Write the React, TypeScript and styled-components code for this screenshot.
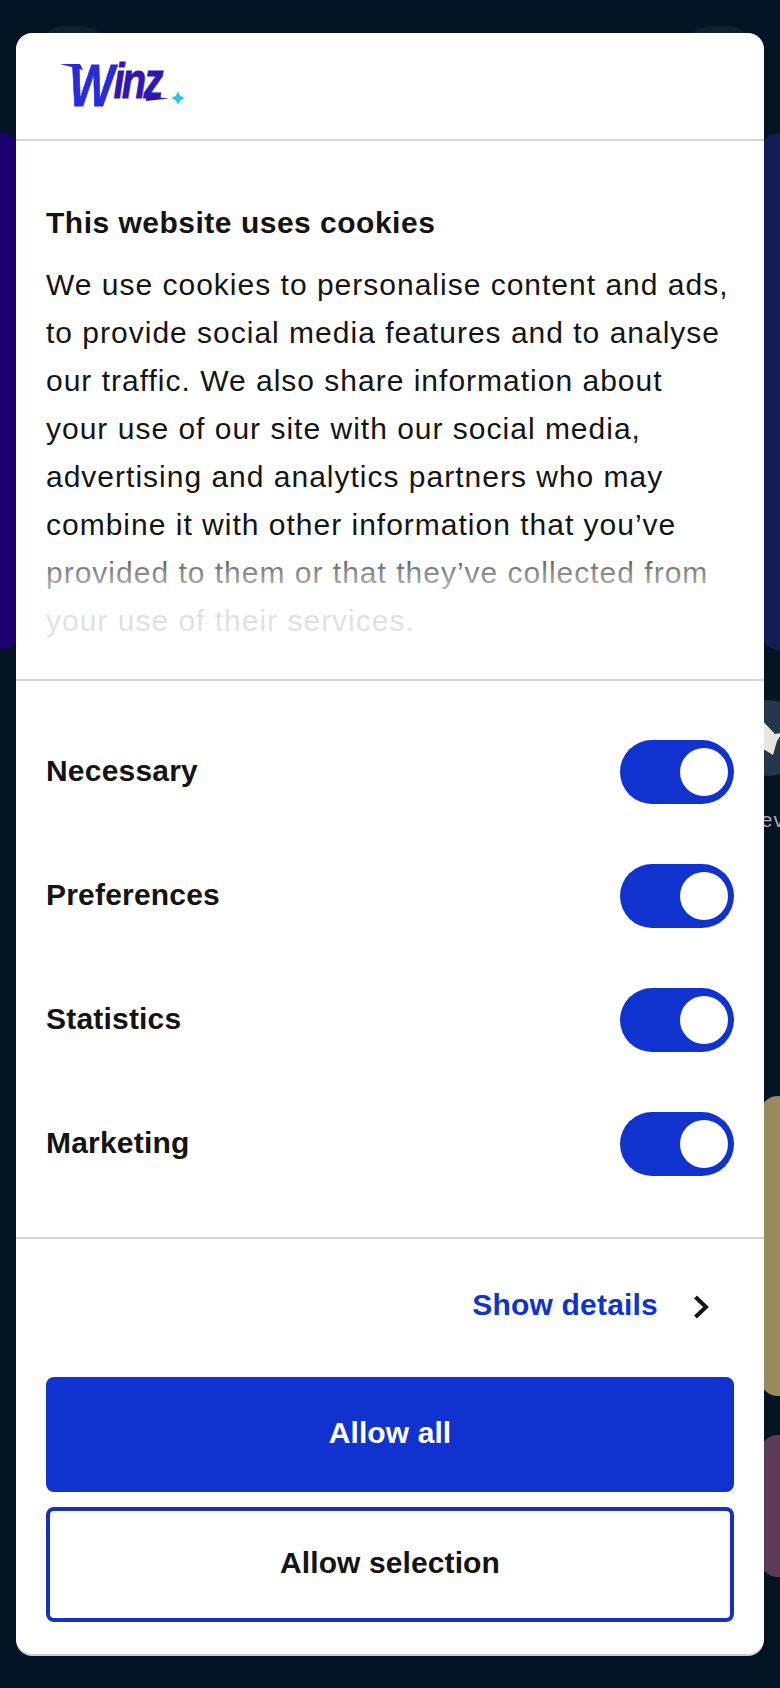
import React from "react";
import styled, { createGlobalStyle } from "styled-components";

const Global = createGlobalStyle`
  html, body { margin: 0; padding: 0; background: #05142a; }
  * { box-sizing: border-box; }
`;

const Page = styled.div`
  position: relative;
  width: 780px;
  height: 1688px;
  overflow: hidden;
  background: #041425;
  font-family: "Liberation Sans", Arial, sans-serif;
`;

const Backdrop = styled.div`
  display: flex;
  flex-direction: column;
  padding-top: 26px;
`;

const TopBar = styled.div`
  display: flex;
  justify-content: space-between;
  padding: 0 28px 0 40px;
  height: 107px;
`;

const TopChip = styled.div`
  width: 66px;
  height: 60px;
  border-radius: 24px;
  background: #101f2f;
`;

const HeroRow = styled.div`
  display: flex;
  justify-content: space-between;
  height: 517px;
`;

const HeroCard = styled.div<{ $tone: string; $side: "left" | "right" }>`
  width: 40px;
  background: ${(p) => p.$tone};
  margin-${(p) => p.$side}: -20px;
  border-radius: 20px;
`;

const ShortcutColumn = styled.div`
  display: flex;
  flex-direction: column;
  align-items: flex-end;
  margin-top: 50px;
  height: 396px;
`;

const ShortcutIcon = styled.svg`
  display: block;
  margin-right: -26px;
`;

const ShortcutLabel = styled.div`
  margin-top: 32px;
  margin-right: -51px;
  font-size: 21px;
  line-height: 24px;
  letter-spacing: 1px;
  color: #a3adb8;
`;

const PromoCard = styled.div<{ $tone: string; $height: number; $gap: number }>`
  align-self: flex-end;
  width: 40px;
  height: ${(p) => p.$height}px;
  margin: 0 -20px ${(p) => p.$gap}px 0;
  border-radius: 18px;
  background: ${(p) => p.$tone};
`;

const Dialog = styled.div`
  position: absolute;
  left: 16px;
  top: 33px;
  width: 748px;
  height: 1621px;
  display: flex;
  flex-direction: column;
  background: #fff;
  border-radius: 16px;
  box-shadow: 0 2px 0 #c9ced3;
  color: #141414;
`;

const Header = styled.header`
  height: 108px;
  border-bottom: 2px solid #d6d6d6;
  padding: 30px 0 0 44px;
`;

const Logo = styled.div`
  position: relative;
  width: 125px;
  height: 50px;
`;

const LogoWord = styled.div`
  position: absolute;
  left: 9px;
  top: -7px;
  display: flex;
  align-items: flex-start;
  font-style: italic;
  font-weight: 700;
  white-space: nowrap;
  transform-origin: left top;
  transform: scaleX(0.8);
  -webkit-text-stroke: 0.8px currentColor;
`;

const LogoCap = styled.span`
  font-size: 60px;
  line-height: 60px;
  letter-spacing: -4px;
  color: #2a2cd8;
`;

const LogoTail = styled.span`
  margin: 0 0 0 3px;
  font-size: 50px;
  line-height: 50px;
  letter-spacing: -3.5px;
  color: #3018ae;
`;

const LogoMarks = styled.svg`
  position: absolute;
  left: 0;
  top: 0;
`;

const TextSection = styled.section`
  position: relative;
  height: 540px;
  padding: 64px 30px 0;
  border-bottom: 2px solid #d6d6d6;
  overflow: hidden;
  &::after {
    content: "";
    position: absolute;
    left: 0;
    right: 0;
    bottom: 0;
    height: 140px;
    background: linear-gradient(
      rgba(255, 255, 255, 0) 0%,
      rgba(255, 255, 255, 0.5) 24%,
      rgba(255, 255, 255, 0.86) 46%,
      rgba(255, 255, 255, 0.88) 70%,
      #fff 85%
    );
  }
`;

const Title = styled.h2`
  margin: 0 0 20px;
  font-size: 30px;
  line-height: 36px;
  font-weight: 700;
  letter-spacing: 0.5px;
`;

const Body = styled.p`
  margin: 0;
  font-size: 30px;
  line-height: 48px;
  letter-spacing: 1px;
  white-space: pre-line;
`;

const Toggles = styled.section`
  height: 558px;
  padding: 59px 30px 0;
  display: flex;
  flex-direction: column;
  gap: 60px;
  border-bottom: 2px solid #d6d6d6;
`;

const ToggleRow = styled.div`
  display: flex;
  align-items: center;
  justify-content: space-between;
  height: 64px;
`;

const ToggleLabel = styled.span`
  margin-top: -2px;
  font-size: 30px;
  font-weight: 700;
  letter-spacing: 0.2px;
`;

const Switch = styled.span`
  display: flex;
  justify-content: flex-end;
  align-items: center;
  width: 114px;
  height: 64px;
  padding-right: 6px;
  border-radius: 32px;
  background: #1032cf;
`;

const Knob = styled.span`
  width: 48px;
  height: 48px;
  border-radius: 50%;
  background: #fff;
`;

const Footer = styled.footer`
  display: flex;
  flex-direction: column;
  padding: 0 30px;
`;

const DetailsRow = styled.div`
  display: flex;
  justify-content: flex-end;
  align-items: center;
  gap: 35px;
  height: 132px;
  margin-bottom: 6px;
  padding-right: 25px;
  color: #1032cf;
  font-size: 30px;
  font-weight: 700;
  letter-spacing: 0.2px;
`;

const Chevron = styled.svg`
  display: block;
  margin-top: 4px;
`;

const ActionButton = styled.button<{ $primary?: boolean }>`
  display: block;
  width: 688px;
  height: 115px;
  margin: 0 0 15px;
  padding: 0 0 4px;
  border-radius: 8px;
  border: 4px solid ${(p) => (p.$primary ? "#1032cf" : "#1632bd")};
  background: ${(p) => (p.$primary ? "#1032cf" : "#fff")};
  color: ${(p) => (p.$primary ? "#fff" : "#141414")};
  font: 700 30px "Liberation Sans", Arial, sans-serif;
  letter-spacing: 0.1px;
`;

const rows = ["Necessary", "Preferences", "Statistics", "Marketing"];

const copy = `We use cookies to personalise content and ads,
to provide social media features and to analyse
our traffic. We also share information about
your use of our site with our social media,
advertising and analytics partners who may
combine it with other information that you’ve
provided to them or that they’ve collected from
your use of their services.`;

export default function App() {
  return (
    <Page>
      <Global />
      <Backdrop>
        <TopBar>
          <TopChip />
          <TopChip />
        </TopBar>
        <HeroRow>
          <HeroCard $tone="#1f0070" $side="left" />
          <HeroCard $tone="#131d55" $side="right" />
        </HeroRow>
        <ShortcutColumn>
          <ShortcutIcon width="76" height="76" viewBox="0 0 76 76">
            <circle cx="38" cy="38" r="38" fill="#24364a" />
            <polygon points="30,18 45,34 52,33 47,41 43,55 30,47" fill="#e8e6e0" />
          </ShortcutIcon>
          <ShortcutLabel>Reviews</ShortcutLabel>
        </ShortcutColumn>
        <PromoCard $tone="#9a8a5c" $height={300} $gap={39} />
        <PromoCard $tone="#5e3a5a" $height={142} $gap={0} />
      </Backdrop>
      <Dialog>
        <Header>
          <Logo>
            <LogoWord>
              <LogoCap>W</LogoCap>
              <LogoTail>inz</LogoTail>
            </LogoWord>
            <LogoMarks width="130" height="50" viewBox="0 0 130 50">
              <path d="M0 1 L20 1 L23 7 Z" fill="#2a2cd8" />
              <path d="M86 33 L109 35.500 L86 38 Z" fill="#3413a0" />
              <path d="M118 28 Q119.300 33.700 125 35 Q119.300 36.300 118 42 Q116.700 36.300 111 35 Q116.700 33.700 118 28 Z" fill="#22c7e6" />
            </LogoMarks>
          </Logo>
        </Header>
        <TextSection>
          <Title>This website uses cookies</Title>
          <Body>{copy}</Body>
        </TextSection>
        <Toggles>
          {rows.map((r) => (
            <ToggleRow key={r}>
              <ToggleLabel>{r}</ToggleLabel>
              <Switch>
                <Knob />
              </Switch>
            </ToggleRow>
          ))}
        </Toggles>
        <Footer>
          <DetailsRow>
            Show details
            <Chevron width="16" height="24" viewBox="0 0 16 24">
              <path d="M2.500 2 L13 12 L2.500 22" fill="none" stroke="#141414" strokeWidth="4" />
            </Chevron>
          </DetailsRow>
          <ActionButton $primary>Allow all</ActionButton>
          <ActionButton>Allow selection</ActionButton>
        </Footer>
      </Dialog>
    </Page>
  );
}
